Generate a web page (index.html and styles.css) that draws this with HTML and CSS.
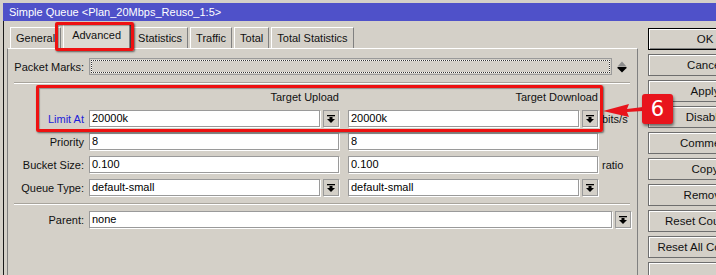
FILE: index.html
```html
<!DOCTYPE html>
<html lang="en">
<head>
  <meta charset="UTF-8" />
  <title>Simple Queue</title>
  <link rel="stylesheet" href="styles.css">
</head>
<body>
  <div class="window">
    <div class="titlebar">Simple Queue &lt;Plan_20Mbps_Reuso_1:5&gt;</div>
    <div class="content">
      <div class="main">
        <div class="tabs">
          <div class="tab">General</div>
          <div class="tab active">Advanced</div>
          <div class="tab">Statistics</div>
          <div class="tab">Traffic</div>
          <div class="tab">Total</div>
          <div class="tab">Total Statistics</div>
        </div>
        <div class="panel">
          <div class="row packet">
            <span class="lbl">Packet Marks:</span>
            <div class="field wide dotted"></div>
            <svg class="updown" width="10" height="12" viewBox="0 0 10 12">
              <polygon points="0.5,5.5 9.5,5.5 5,0.5" fill="#8c8c8c"/>
              <rect x="0.5" y="6" width="9" height="1.2" fill="#000"/>
              <polygon points="0.5,7 9.5,7 5,11.5" fill="#000"/>
            </svg>
          </div>
          <div class="sep"></div>
          <div class="row head">
            <span class="lbl"></span>
            <span class="col-h">Target Upload</span>
            <span class="col-h second">Target Download</span>
          </div>
          <div class="row">
            <span class="lbl blue">Limit At</span>
            <div class="pair">
              <div class="field">20000k</div>
              <span class="dd"><svg width="8" height="8" viewBox="0 0 8 8"><rect x="0" y="0" width="8" height="1.3" fill="#000"/><rect x="2.5" y="2" width="3" height="2.5" fill="#000"/><polygon points="0,4 8,4 4,8" fill="#000"/></svg></span>
            </div>
            <div class="pair second">
              <div class="field">20000k</div>
              <span class="dd"><svg width="8" height="8" viewBox="0 0 8 8"><rect x="0" y="0" width="8" height="1.3" fill="#000"/><rect x="2.5" y="2" width="3" height="2.5" fill="#000"/><polygon points="0,4 8,4 4,8" fill="#000"/></svg></span>
            </div>
            <span class="unit">bits/s</span>
          </div>
          <div class="row">
            <span class="lbl">Priority</span>
            <div class="pair"><div class="field">8</div></div>
            <div class="pair second"><div class="field">8</div></div>
          </div>
          <div class="row">
            <span class="lbl">Bucket Size:</span>
            <div class="pair"><div class="field">0.100</div></div>
            <div class="pair second"><div class="field">0.100</div></div>
            <span class="unit">ratio</span>
          </div>
          <div class="row">
            <span class="lbl">Queue Type:</span>
            <div class="pair">
              <div class="field">default-small</div>
              <span class="dd"><svg width="8" height="8" viewBox="0 0 8 8"><rect x="0" y="0" width="8" height="1.3" fill="#000"/><rect x="2.5" y="2" width="3" height="2.5" fill="#000"/><polygon points="0,4 8,4 4,8" fill="#000"/></svg></span>
            </div>
            <div class="pair second">
              <div class="field">default-small</div>
              <span class="dd"><svg width="8" height="8" viewBox="0 0 8 8"><rect x="0" y="0" width="8" height="1.3" fill="#000"/><rect x="2.5" y="2" width="3" height="2.5" fill="#000"/><polygon points="0,4 8,4 4,8" fill="#000"/></svg></span>
            </div>
          </div>
          <div class="sep low"></div>
          <div class="row parent">
            <span class="lbl">Parent:</span>
            <div class="field wide">none</div>
            <span class="dd"><svg width="8" height="8" viewBox="0 0 8 8"><rect x="0" y="0" width="8" height="1.3" fill="#000"/><rect x="2.5" y="2" width="3" height="2.5" fill="#000"/><polygon points="0,4 8,4 4,8" fill="#000"/></svg></span>
          </div>
        </div>
      </div>
      <div class="buttons">
        <div class="btn default">OK</div>
        <div class="btn">Cancel</div>
        <div class="btn">Apply</div>
        <div class="btn">Disable</div>
        <div class="btn">Comment</div>
        <div class="btn">Copy</div>
        <div class="btn">Remove</div>
        <div class="btn">Reset Counters</div>
        <div class="btn">Reset All Counters</div>
        <div class="btn"></div>
      </div>
    </div>
  </div>

  <!-- annotation overlays -->
  <div class="mark mark-tab"></div>
  <div class="mark mark-limit"></div>
  <svg class="arrow" width="46" height="20" viewBox="0 0 46 20">
    <polygon points="4,13 30,6 28,11 44,9 44,13 28,14 30,19" fill="#e8141c"/>
  </svg>
  <div class="callout">6</div>
</body>
</html>
```

FILE: styles.css
```css
body { margin: 0; width: 716px; height: 275px; overflow: hidden; background: #d4d0c8; position: relative; font-family: "Liberation Sans", Arial, sans-serif; font-size: 11px; color: #111; }

.window { margin: 3px 0 0 3px; height: 272px; display: flex; flex-direction: column; }
.titlebar { height: 18px; line-height: 19px; background: #4f51c9; color: #fff; padding-left: 6px; font-size: 11px; }
.content { flex: 1; display: flex; border-left: 1px solid #1a1a1a; overflow: hidden; }

.main { width: 631px; padding-left: 3px; display: flex; flex-direction: column; flex: none; }
.tabs { display: flex; height: 27px; align-items: flex-end; padding-left: 3px; }
.tab { height: 20px; line-height: 21px; padding: 0 5px; margin-right: 2px; border: 1px solid #fff; border-right-color: #808080; border-bottom: none; background: #d4d0c8; }
.tab.active { height: 23px; line-height: 20px; padding: 0 8px; background: #dcd8d0; box-shadow: 1px 0 0 #404040; }

.panel { flex: 1; border-top: 1px solid #fff; border-left: 1px solid #808080; border-right: 1px solid #808080; }

.row { display: flex; align-items: center; height: 17px; margin-top: 6px; }
.row.packet { margin-top: 9px; }
.row.head { margin-top: 6px; height: 14px; }
.row.parent { margin-top: 6px; }
.lbl { width: 76px; text-align: right; margin-right: 4px; flex: none; padding-right: 1px; }
.lbl.blue { color: #1d1dd8; }

.pair { width: 250px; height: 17px; display: flex; flex: none; }
.pair.second { margin-left: 9px; }
.col-h { width: 250px; text-align: right; flex: none; }
.col-h.second { margin-left: 9px; }

.field { flex: 1; height: 17px; box-sizing: border-box; border: 1px solid #9a9a9a; box-shadow: 1px 1px 0 #fff; background: #fff; padding-left: 2px; line-height: 15px; color: #000; white-space: nowrap; overflow: hidden; }
.field.wide { flex: none; width: 523px; }
.field.dotted { border: 1px solid #9a9a9a; background: #d4d0c8; box-shadow: inset 0 0 0 1px #d4d0c8, inset 0 0 0 2px #fff; outline: 1px dotted #333; outline-offset: -3px; }

.dd { width: 16px; height: 17px; box-sizing: border-box; margin-left: 3px; border: 1px solid #9a9a9a; box-shadow: 1px 1px 0 #fff; display: flex; align-items: center; justify-content: center; flex: none; }
.updown { margin-left: 5px; }
.unit { margin-left: 4px; }

.sep { height: 0; border-top: 1px solid #a8a49c; border-bottom: 1px solid #fff; margin: 7px 7px 0 6px; }
.sep.low { margin-top: 7px; }

.buttons { margin-left: 10px; padding-top: 7px; display: flex; flex-direction: column; gap: 4px; }
.btn { width: 114px; height: 22px; box-sizing: border-box; border: 1px solid #6e6e6e; box-shadow: inset 1px 1px 0 #fff; text-align: center; line-height: 20px; font-size: 11.5px; white-space: nowrap; flex: none; }
.btn.default { border-color: #000; box-shadow: inset 1px 1px 0 #fff, inset -1px -1px 0 #808080; }

.mark { position: absolute; border: 3px solid #ee1111; border-radius: 2px; box-shadow: 1px 1px 2px rgba(0,0,0,.55), inset 1px 1px 1px rgba(0,0,0,.3); }
.mark-tab { left: 55px; top: 22px; width: 73px; height: 23px; }
.mark-limit { left: 36px; top: 85px; width: 561px; height: 41px; }
.arrow { position: absolute; left: 599px; top: 98px; }
.callout { position: absolute; left: 642px; top: 94px; width: 31px; height: 30px; background: #e8141c; border-radius: 3px; color: #fff; font-family: "DejaVu Sans", sans-serif; font-size: 21px; text-align: center; line-height: 30px; box-shadow: 1px 2px 3px rgba(0,0,0,.5); }
```
